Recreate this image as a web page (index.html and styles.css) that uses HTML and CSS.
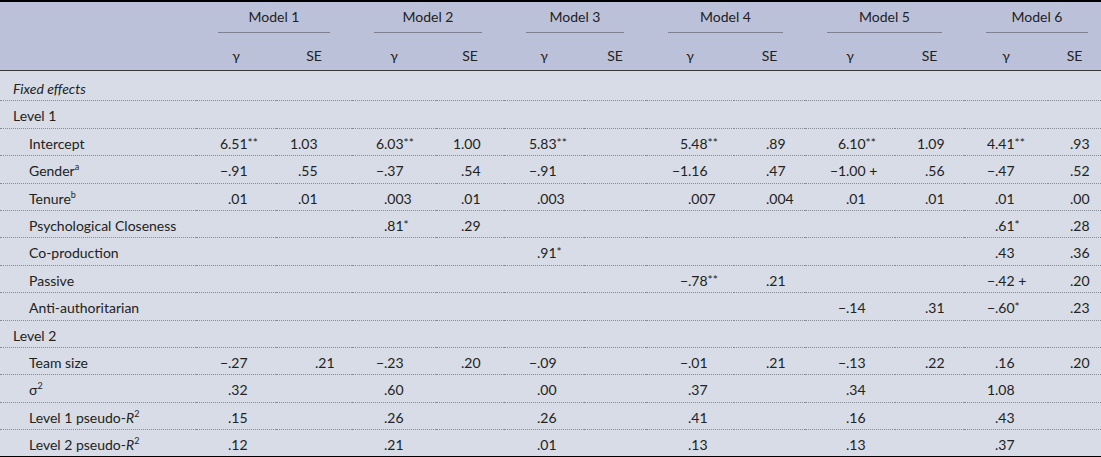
FILE: index.html
```html
<!DOCTYPE html>
<html lang="en">
<head>
<meta charset="utf-8">
<title>Multilevel models</title>
<link rel="stylesheet" href="styles.css">
</head>
<body>
<table class="results">
  <colgroup>
    <col class="w-label">
    <col class="w-1g"><col class="w-1s">
    <col class="w-2g"><col class="w-2s">
    <col class="w-3g"><col class="w-3s">
    <col class="w-4g"><col class="w-4s">
    <col class="w-5g"><col class="w-5s">
    <col class="w-6g"><col class="w-6s">
  </colgroup>
  <thead>
    <tr class="models">
      <th></th>
      <th colspan="2"><span class="rule">Model 1</span></th>
      <th colspan="2"><span class="rule">Model 2</span></th>
      <th colspan="2"><span class="rule">Model 3</span></th>
      <th colspan="2"><span class="rule">Model 4</span></th>
      <th colspan="2"><span class="rule">Model 5</span></th>
      <th colspan="2" class="last"><span class="rule">Model 6</span></th>
    </tr>
    <tr class="stats">
      <th></th>
      <th>γ</th><th>SE</th>
      <th>γ</th><th>SE</th>
      <th>γ</th><th>SE</th>
      <th>γ</th><th>SE</th>
      <th>γ</th><th>SE</th>
      <th>γ</th><th>SE</th>
    </tr>
  </thead>
  <tbody>
    <tr class="first"><td colspan="13" class="lvl0"><em>Fixed effects</em></td></tr>
    <tr><td colspan="13" class="lvl0">Level 1</td></tr>
    <tr>
      <td class="lvl1">Intercept</td>
      <td><span class="n">6</span>.51<sup>**</sup></td><td><span class="n">1</span>.03</td>
      <td><span class="n">6</span>.03<sup>**</sup></td><td><span class="n">1</span>.00</td>
      <td><span class="n">5</span>.83<sup>**</sup></td><td></td>
      <td><span class="n">5</span>.48<sup>**</sup></td><td><span class="n"></span>.89</td>
      <td><span class="n">6</span>.10<sup>**</sup></td><td><span class="n">1</span>.09</td>
      <td><span class="n">4</span>.41<sup>**</sup></td><td><span class="n"></span>.93</td>
    </tr>
    <tr>
      <td class="lvl1">Gender<sup class="fn">a</sup></td>
      <td><span class="n">−</span>.91</td><td><span class="n"></span>.55</td>
      <td><span class="n">−</span>.37</td><td><span class="n"></span>.54</td>
      <td><span class="n">−</span>.91</td><td></td>
      <td><span class="n">−1</span>.16</td><td><span class="n"></span>.47</td>
      <td><span class="n">−1</span>.00 +</td><td><span class="n"></span>.56</td>
      <td><span class="n">−</span>.47</td><td><span class="n"></span>.52</td>
    </tr>
    <tr>
      <td class="lvl1">Tenure<sup class="fn">b</sup></td>
      <td><span class="n"></span>.01</td><td><span class="n"></span>.01</td>
      <td><span class="n"></span>.003</td><td><span class="n"></span>.01</td>
      <td><span class="n"></span>.003</td><td></td>
      <td><span class="n"></span>.007</td><td><span class="n"></span>.004</td>
      <td><span class="n"></span>.01</td><td><span class="n"></span>.01</td>
      <td><span class="n"></span>.01</td><td><span class="n"></span>.00</td>
    </tr>
    <tr>
      <td class="lvl1">Psychological Closeness</td>
      <td></td><td></td>
      <td><span class="n"></span>.81<sup>*</sup></td><td><span class="n"></span>.29</td>
      <td></td><td></td>
      <td></td><td></td>
      <td></td><td></td>
      <td><span class="n"></span>.61<sup>*</sup></td><td><span class="n"></span>.28</td>
    </tr>
    <tr>
      <td class="lvl1">Co-production</td>
      <td></td><td></td>
      <td></td><td></td>
      <td><span class="n"></span>.91<sup>*</sup></td><td></td>
      <td></td><td></td>
      <td></td><td></td>
      <td><span class="n"></span>.43</td><td><span class="n"></span>.36</td>
    </tr>
    <tr>
      <td class="lvl1">Passive</td>
      <td></td><td></td>
      <td></td><td></td>
      <td></td><td></td>
      <td><span class="n">−</span>.78<sup>**</sup></td><td><span class="n"></span>.21</td>
      <td></td><td></td>
      <td><span class="n">−</span>.42 +</td><td><span class="n"></span>.20</td>
    </tr>
    <tr>
      <td class="lvl1">Anti-authoritarian</td>
      <td></td><td></td>
      <td></td><td></td>
      <td></td><td></td>
      <td></td><td></td>
      <td><span class="n">−</span>.14</td><td><span class="n"></span>.31</td>
      <td><span class="n">−</span>.60<sup>*</sup></td><td><span class="n"></span>.23</td>
    </tr>
    <tr><td colspan="13" class="lvl0">Level 2</td></tr>
    <tr>
      <td class="lvl1">Team size</td>
      <td><span class="n">−</span>.27</td><td class="shift"><span class="n"></span>.21</td>
      <td><span class="n">−</span>.23</td><td><span class="n"></span>.20</td>
      <td><span class="n">−</span>.09</td><td></td>
      <td><span class="n">−</span>.01</td><td><span class="n"></span>.21</td>
      <td><span class="n">−</span>.13</td><td><span class="n"></span>.22</td>
      <td><span class="n"></span>.16</td><td><span class="n"></span>.20</td>
    </tr>
    <tr>
      <td class="lvl1">σ<sup class="fn">2</sup></td>
      <td><span class="n"></span>.32</td><td></td>
      <td><span class="n"></span>.60</td><td></td>
      <td><span class="n"></span>.00</td><td></td>
      <td><span class="n"></span>.37</td><td></td>
      <td><span class="n"></span>.34</td><td></td>
      <td><span class="n">1</span>.08</td><td></td>
    </tr>
    <tr>
      <td class="lvl1">Level 1 pseudo-<i>R</i><sup class="fn">2</sup></td>
      <td><span class="n"></span>.15</td><td></td>
      <td><span class="n"></span>.26</td><td></td>
      <td><span class="n"></span>.26</td><td></td>
      <td><span class="n"></span>.41</td><td></td>
      <td><span class="n"></span>.16</td><td></td>
      <td><span class="n"></span>.43</td><td></td>
    </tr>
    <tr>
      <td class="lvl1">Level 2 pseudo-<i>R</i><sup class="fn">2</sup></td>
      <td><span class="n"></span>.12</td><td></td>
      <td><span class="n"></span>.21</td><td></td>
      <td><span class="n"></span>.01</td><td></td>
      <td><span class="n"></span>.13</td><td></td>
      <td><span class="n"></span>.13</td><td></td>
      <td><span class="n"></span>.37</td><td></td>
    </tr>
  </tbody>
</table>
</body>
</html>
```

FILE: styles.css
```css
html, body {
  margin: 0;
  padding: 0;
  background: #d7dce6;
}

body {
  font-family: Lato, "Noto Sans", "DejaVu Sans", sans-serif;
  font-size: 14px;
  color: #222;
}

.results {
  width: 1101px;
  table-layout: fixed;
  border-collapse: collapse;
  border-top: 2px solid #000;
  border-bottom: 2px solid #000;
}

.w-label { width: 196px; }
.w-1g { width: 80px; }
.w-1s { width: 76px; }
.w-2g { width: 84px; }
.w-2s { width: 68px; }
.w-3g { width: 80px; }
.w-3s { width: 62px; }
.w-4g { width: 88px; }
.w-4s { width: 71px; }
.w-5g { width: 90px; }
.w-5s { width: 69px; }
.w-6g { width: 84px; }
.w-6s { width: 53px; }

thead {
  background: #bcc1da;
}

thead th {
  font-weight: normal;
  line-height: 17px;
  padding: 0;
}

.models th {
  padding: 6px 22px 7px;
  text-align: center;
}

.models th.last {
  padding-right: 13px;
}

.rule {
  display: block;
  padding-bottom: 7px;
  border-bottom: 1px solid #7d8193;
}

.stats th {
  padding: 7px 0 6px;
  text-align: center;
  border-bottom: 1px solid #3a3a3a;
}

tbody {
  background: #d7dce6;
}

tbody td {
  padding: 6px 0 3.4px;
  line-height: 17px;
  white-space: nowrap;
  border-bottom: 1px dotted #868b98;
}

tbody tr:last-child td {
  border-bottom: none;
}

tbody tr.first td {
  padding-top: 9px;
}

.n {
  display: inline-block;
  width: 16px;
  text-align: right;
}

tbody td:nth-child(2)  { padding-left: 16px; }
tbody td:nth-child(3)  { padding-left: 6px; }
tbody td:nth-child(4)  { padding-left: 16px; }
tbody td:nth-child(5)  { padding-left: 9px; }
tbody td:nth-child(6)  { padding-left: 17px; }
tbody td:nth-child(7)  { padding-left: 10px; }
tbody td:nth-child(8)  { padding-left: 26px; }
tbody td:nth-child(9)  { padding-left: 16px; }
tbody td:nth-child(10) { padding-left: 25px; }
tbody td:nth-child(11) { padding-left: 14px; }
tbody td:nth-child(12) { padding-left: 15px; }
tbody td:nth-child(13) { padding-left: 6px; }

tbody td.shift { padding-left: 23px; }

tbody td.lvl0 { padding-left: 13px; }
tbody td.lvl1 { padding-left: 29px; }

sup {
  font-size: 12px;
  line-height: 0;
  vertical-align: 2px;
}

sup.fn {
  font-size: 9px;
  vertical-align: 6px;
}

em, i {
  font-style: italic;
}
```
